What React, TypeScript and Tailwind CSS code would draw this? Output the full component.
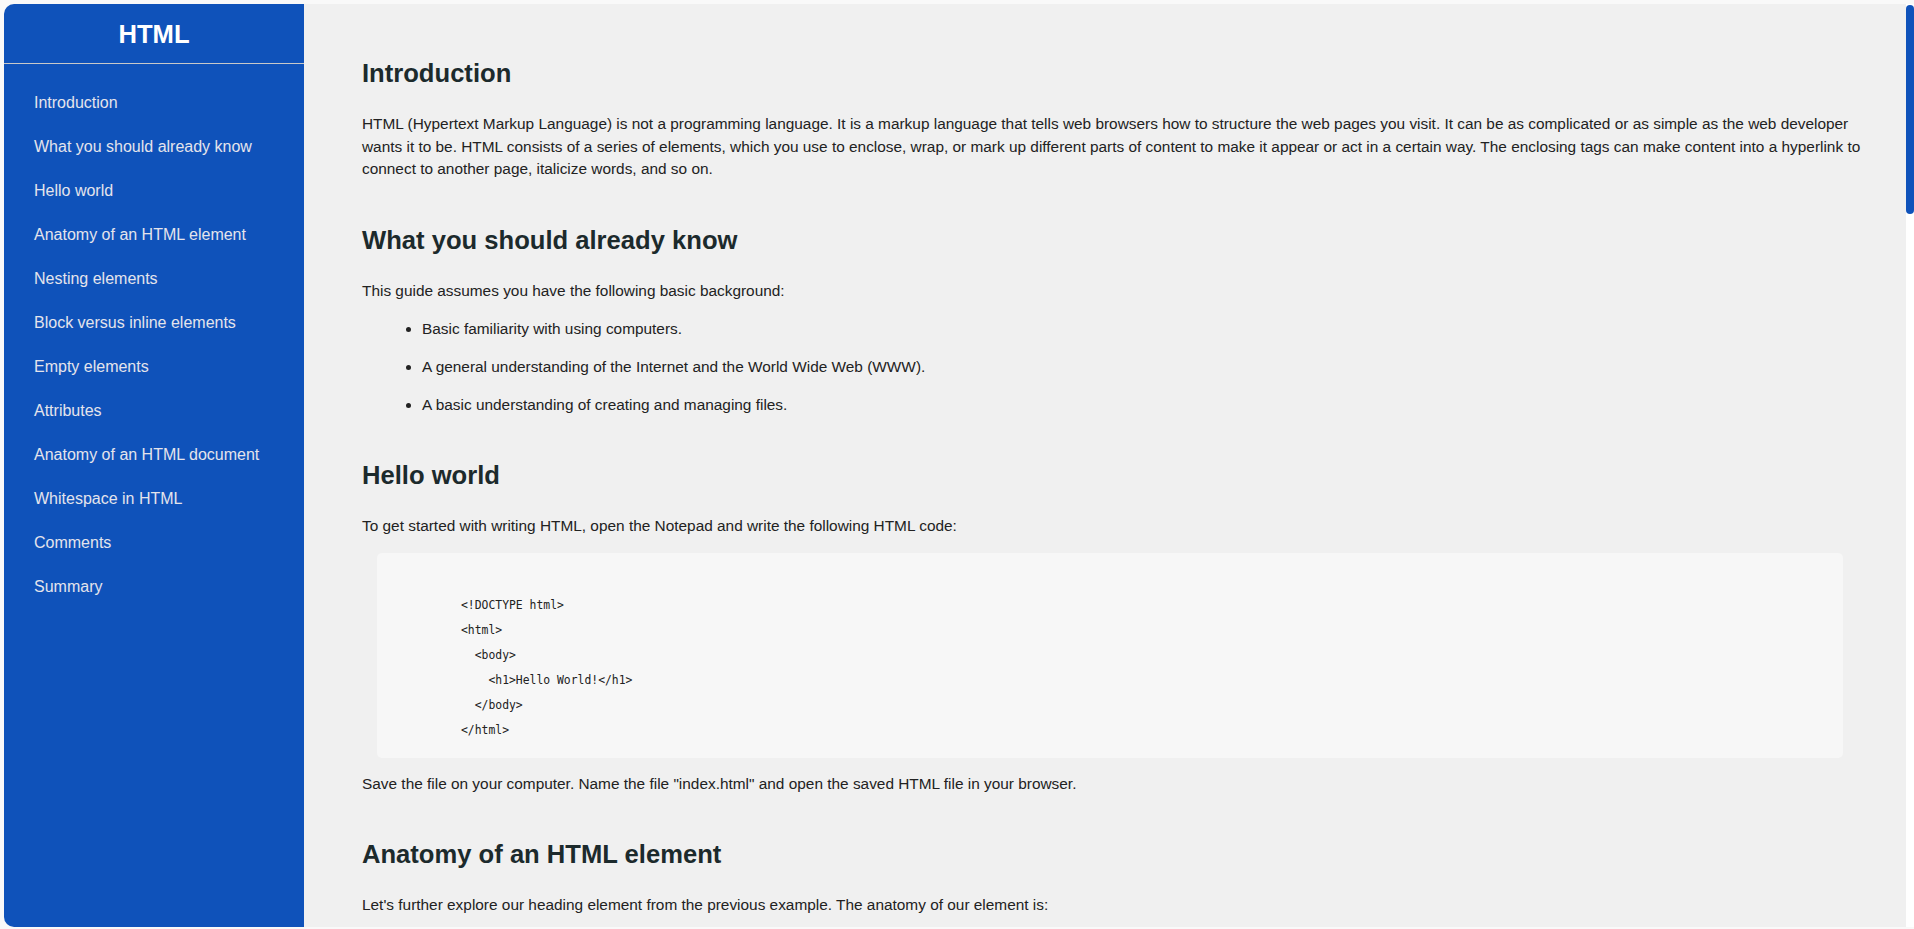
import React from "react";

const nav = [
  "Introduction",
  "What you should already know",
  "Hello world",
  "Anatomy of an HTML element",
  "Nesting elements",
  "Block versus inline elements",
  "Empty elements",
  "Attributes",
  "Anatomy of an HTML document",
  "Whitespace in HTML",
  "Comments",
  "Summary",
];

function H2({ children }: { children: React.ReactNode }) {
  return <h2 className="text-[25.6px] leading-[30px] font-bold text-[#1c2a2c]">{children}</h2>;
}

function P({ children }: { children: React.ReactNode }) {
  return <p className="text-[15.4px] leading-[22.5px] text-[#222]">{children}</p>;
}

function Code({ code }: { code: string }) {
  return (
    <pre className="ml-[15px] mr-[33px] rounded-[5px] bg-[#f7f7f7] pt-[40px] pb-[15px] pl-[84px] font-['DejaVu_Sans_Mono',monospace] text-[11.4px] leading-[25px] text-[#222]">
      {code}
    </pre>
  );
}

function Section({ title, children }: { title: string; children: React.ReactNode }) {
  return (
    <section className="flex flex-col">
      <H2>{title}</H2>
      <div className="mt-[25px] flex flex-col gap-[15px]">{children}</div>
    </section>
  );
}

function List({ items }: { items: string[] }) {
  return (
    <ul className="list-disc pl-[60px] pt-[0.5px] space-y-[15.5px] text-[15.4px] leading-[22.5px] text-[#222]">
      {items.map((t) => (
        <li key={t}>{t}</li>
      ))}
    </ul>
  );
}

export default function App() {
  return (
    <div className="h-screen w-full overflow-hidden bg-[#f9f9f9] pt-[4px] pl-[4px] font-['Liberation_Sans',Arial,sans-serif]">
      <div className="flex h-[923px]">
        <aside className="w-[300px] shrink-0 rounded-l-[10px] bg-[#0f52ba]">
          <div className="border-b border-[#c9c9c9] pt-[15px] pb-[14px] text-center">
            <h1 className="text-[25.6px] leading-[30px] font-bold text-white">HTML</h1>
          </div>
          <nav className="pt-[17px]">
            {nav.map((n) => (
              <a key={n} href="#" className="block h-[44px] pl-[30px] text-[16px] leading-[44px] text-[#e4e4ec]">
                {n}
              </a>
            ))}
          </nav>
        </aside>
        <main className="flex flex-1 h-full bg-[#f0f0f0]">
          <div className="flex-1 h-full overflow-hidden">
            <div className="pt-[54px] pl-[58px] pr-[30px] pb-[60px] flex flex-col gap-[44px]">
              <Section title="Introduction">
                <P>
                  HTML (Hypertext Markup Language) is not a programming language. It is a markup language that tells web browsers how to structure the web pages you visit. It can be as complicated or as simple as the web developer wants it to be. HTML consists of a series of elements, which you use to enclose, wrap, or mark up different parts of content to make it appear or act in a certain way. The enclosing tags can make content into a hyperlink to connect to another page, italicize words, and so on.
                </P>
              </Section>
              <Section title="What you should already know">
                <P>This guide assumes you have the following basic background:</P>
                <List
                  items={[
                    "Basic familiarity with using computers.",
                    "A general understanding of the Internet and the World Wide Web (WWW).",
                    "A basic understanding of creating and managing files.",
                  ]}
                />
              </Section>
              <Section title="Hello world">
                <P>To get started with writing HTML, open the Notepad and write the following HTML code:</P>
                <Code
                  code={`<!DOCTYPE html>
<html>
  <body>
    <h1>Hello World!</h1>
  </body>
</html>`}
                />
                <P>Save the file on your computer. Name the file "index.html" and open the saved HTML file in your browser.</P>
              </Section>
              <Section title="Anatomy of an HTML element">
                <P>Let's further explore our heading element from the previous example. The anatomy of our element is:</P>
                <List
                  items={[
                    "The opening tag: This consists of the name of the element, wrapped in opening and closing angle brackets.",
                    "The content: This is the content of the element. In this case, it is simply text.",
                    "The closing tag: This is the same as the opening tag, except that it includes a forward slash before the element name.",
                  ]}
                />
              </Section>
            </div>
          </div>
          <div className="w-[8px] shrink-0 h-full bg-white pt-[1px]">
            <div className="h-[209px] w-[8px] rounded-[4px] bg-[#0f52ba]" />
          </div>
        </main>
      </div>
    </div>
  );
}
